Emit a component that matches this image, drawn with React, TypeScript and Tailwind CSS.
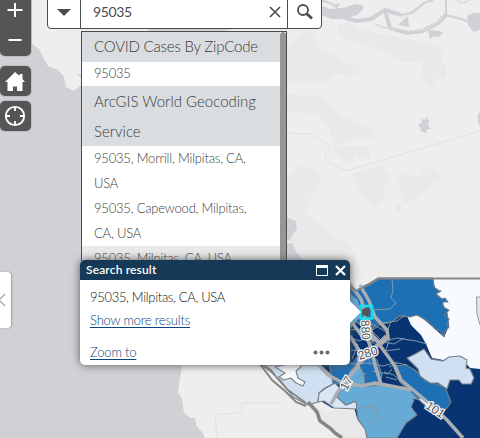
import React from "react";

const highways = [
  "M350 284L361 299L365 312L364 330L371 348L375 365L381 384",
  "M360 285L369 301L375 317L387 330L388 338L381 344L372 335L367 318",
  "M350 320L362 336L376 340L387 355L395 366L401 380L412 389L432 406L446 419L463 438",
  "M350 336L360 352L358 367L347 379L337 393L331 404",
  "M318 364L328 375L343 383L362 386L375 383L391 386L412 390",
  "M386 336L377 346L366 358L356 366",
];

function Map() {
  return (
    <svg className="absolute inset-0 h-full w-full" viewBox="0 0 480 438" fill="none">
      <path fill="#eeeeee" d="M0 0H480V438H0z" />
      <path fill="#d1d0d5" d="M0 0H25L32 44L39 49L44 59L48 66L58 70L64 77L66 87L74 91L81 85L180 110V365L182 366L179 384L178 392L182 399L184 413L190 418L195 418L196 425L202 432L205 438H0z" />
      <path fill="#cfcfd4" d="M77 73L81 75V78zM146 28L180 29L240 28L224 31H150z" />
      <g fill="#e9e9e9">
        <path d="M337 24L350 23L363 31L382 34L403 38L425 42L440 47L443 62L447 68L445 78L435 79L431 90L425 80L420 78L424 63L402 62L384 52L366 45L340 37z" />
        <path d="M287 45L310 30L322 50L336 55L344 62L360 66L361 74L350 76L335 73L327 83H287zM287 94L321 97L331 108L346 118L358 124L373 129V138L358 137L348 142L335 146L329 128L318 114L287 112z" />
        <path d="M287 178L300 166L315 169L321 180L311 196L305 212L315 221L327 230L337 239L349 244L363 274L351 287L330 261H287z" />
        <path d="M331 146H367L371 158L360 159L356 153L352 163L341 160zM350 173L365 171L382 165L390 177L384 188L383 201L375 207L369 202L361 191L354 180zM395 178L405 173L419 178L426 168L438 172L441 181L431 184L424 193L410 201L402 204L400 188zM398 203L403 208L399 214L395 207z" />
      </g>
      <g fill="#d0d0d6">
        <path d="M320 5L330 9L343 8L356 4L363 5V9L357 15L344 19L331 19L320 14zM333 5L340 3L337 9zM398 25L408 16L409 27zM428 30L440 31L443 33L439 37L434 36L430 39zM467 16L474 13L480 13V30L474 32L468 25zM418 125L422 122L421 119L425 120L426 117L429 121L428 125L431 129L427 129L426 133L421 131L420 127zM478 114L480 112V126L478 123z" />
        <path d="M287 217L290 219L296 221L297 229L292 235L290 241L287 239zM287 244L292 243L297 253L303 260H287z" />
      </g>
      <path stroke="#d0d0d6" strokeWidth="2" d="M320 0L330 3L336 7M401 15L411 13L424 3L433 0M446 0V15M446 15L461 19L472 23" />
      <path stroke="#d0d0d6" strokeWidth="4" d="M345 18L357 21L371 19L385 10L401 15M385 10L390 28L407 33L422 31L438 23L446 15" />
      <path stroke="#e4e4e6" strokeWidth="1" d="M386 13L402 17L412 14L428 2M388 13L392 27L409 31L427 29L444 17" />
      <path stroke="#d7d7da" strokeWidth="1.5" d="M375 24L382 27L394 29M457 0L461 3L466 2L468 0" />
      <path stroke="#e1e1e1" d="M287 133L312 134L320 140L331 146L325 155L326 160L346 171L430 146L480 131M217 438L215 415L242 412V403H280" />
      <path fill="#e8e8e8" d="M310 405L327 414L334 410L356 410L364 424L367 438H344L325 424z" />
      <path d="M260 364L272 380L285 391L296 402L306 406" stroke="#858585" strokeWidth="2" />
      <path fill="#083471" d="M350 288L355 291L362 287L370 283L378 278L480 279V438H367L365 429L357 418L354 407L332 408L319 400L308 405L293 397L288 391L280 380L271 370L260 365L350 360z" />
      <path fill="#f7faff" d="M433 279H480V369L470 368L461 357L449 361L432 358L426 344L421 335L411 325L407 316L419 315L444 337L449 326L447 311L436 293z" />
      <path fill="#e6e6e6" stroke="#999" d="M480 297H476.500L477 314L480 325" />
      <g stroke="#778087" strokeWidth="1.1" strokeLinejoin="round">
        <path fill="#d0e0f2" d="M262 365H319L331 374L333 384L325 388L319 393L318 402L308 405L293 397L287 389L281 381L271 372z" />
        <path fill="#f7f9fc" d="M275 367L288 364L300 363L301 367L296 371L298 378L305 382L303 386L296 383L291 378L284 380L279 377L285 373z" />
        <path fill="#d9e7f5" d="M319 393L326 388L335 383L342 391L337 397L346 405L356 401L357 409L334 408L324 401L318 402z" />
        <path fill="#1e70b4" d="M329 363H353L362 350L377 360L382 375L379 386L352 386L333 383z" />
        <path fill="#66abd6" d="M350 371L358 363L364 374L365 387L386 384L404 389L414 400L411 407L417 415L406 423L397 438H367L365 429L358 420L356 401L346 405L337 397L343 386" />
        <path fill="#1e70b4" d="M350 289L355 291L362 287L370 283L378 278H433L434 287L438 290L441 291L436 294L442 299L445 298L448 302L443 302L443 307L449 310L445 315L449 319L447 324L449 327L445 331L444 337L440 331L435 329L430 323L424 319L417 315L410 317L400 316L390 323L377 324L371 330L351 320z" />
        <path fill="#1e70b4" d="M393 366L406 365L415 370L426 381L445 387L451 402L447 408L439 415L428 407L408 390L400 382z" />
        <path fill="#d0e0f2" d="M407 358L415 354L424 349L431 359L443 361L449 357L460 356L467 360L466 368L470 369L474 378L471 384L462 384L459 380H450L447 389L438 383L430 383L424 379L420 376L418 369z" />
        <path fill="#f3f6fb" d="M417 398L425 399L438 407L438 414L429 409z" />
      </g>
      <path fill="#66abd6" d="M350 294L358 300L361 316L350 329zM403 387L411 392L418 400L407 397z" />
      <g stroke="#7f9aaa" strokeWidth="1">
        <path d="M392 279L393 290L391 298L396 303L390 309L371 310M371 331L382 323L397 321L405 315M371 341L385 341L397 338L416 341L427 344M350 330L360 329L365 335L372 324L387 332L390 324M350 338L360 341L372 331L383 342L394 344L404 338M351 350L365 351L372 342L385 351L400 349M350 307L363 312M351 364L370 363L383 366L397 362M384 372L394 375L400 381M372 371L388 374L392 369M366 373L357 378L364 387M357 409L369 405L379 409M370 407L376 410L381 418L376 423L370 421M389 367L398 363L407 365M386 377L397 380M358 344L352 359M367 349L370 365M390 338L386 350" />
      </g>
      <g stroke="#a9adb4" strokeWidth="3.5" strokeLinejoin="round">
        {highways.map((d) => <path key={d} d={d} />)}
      </g>
      <path stroke="#858585" strokeWidth="1.8" d="M350 286L356 291L364 287L370 284L379 278.5H480M260 363L271 370L277 378L288 390L306 403" />
      <path d="M308 402L317 412L320 421L330 428L335 433L342 438" stroke="#858585" strokeWidth="3.5" />
      <g fill="#4f5357" stroke="#f8f8f8" strokeWidth="2.5" paintOrder="stroke" fontFamily="Liberation Sans, sans-serif" fontSize="12" textAnchor="middle">
        <text transform="translate(361.500 330) rotate(87)">880</text>
        <text transform="translate(369 357) rotate(-18)">280</text>
        <text transform="translate(350 385) rotate(-62)">17</text>
        <text transform="translate(433 413) rotate(34)">101</text>
      </g>
      <path d="M360.500 306H372V318.500H360.500z" stroke="#18dfe7" strokeWidth="2.5" />
      <circle cx="366" cy="312" r="4" fill="#555" />
    </svg>
  );
}

const item = "px-3 text-[13px] font-light leading-[25px] tracking-[-0.2px]";
const group = "bg-[#d9dde0] px-3 text-[15px] font-light";
const link = "self-start font-light leading-[18px] tracking-[-0.18px] text-[#0d4480] underline underline-offset-2";

export default function App() {
  return (
    <main className="relative h-[438px] w-[480px] overflow-hidden bg-[#eeeeee] font-['Lato',sans-serif] text-[#3c3c3c]">
      <Map />

      <div className="absolute left-0 top-0 flex w-[30.5px] flex-col text-white">
        <div className="flex h-14 flex-col rounded-b-[5px] bg-[#555] shadow-[0_0_0_1px_#bdbdc1]">
          <button aria-label="Zoom in" className="h-6">
            <svg width="30" height="24"><path d="M15 3V17M7.500 10H22.500" stroke="white" strokeWidth="2" /></svg>
          </button>
          <button aria-label="Zoom out" className="h-8">
            <svg width="30" height="32"><path d="M8.500 16H21.500" stroke="white" strokeWidth="2" /></svg>
          </button>
        </div>
        <button aria-label="Home" className="mt-[10px] h-[30px] rounded-[5px] bg-[#555] shadow-[0_0_0_1px_#bdbdc1]">
          <svg width="30" height="30" fill="white"><path d="M15 6L5 16H7.500V25H13V20.500H17V25H22.500V16H25L22.500 13V8H19.500V10z" /></svg>
        </button>
        <button aria-label="My location" className="mt-[5px] h-[30px] rounded-[5px] bg-[#555] shadow-[0_0_0_1px_#bdbdc1]">
          <svg width="30" height="30" fill="none" stroke="white" strokeWidth="1.8"><circle cx="15" cy="15" r="9.2" /><path d="M15 6V10M15 20V24M6 15H10M20 15H24" /></svg>
        </button>
      </div>

      <button aria-label="Open panel" className="absolute left-0 top-[272px] flex h-14 w-[11px] items-center rounded-r-[4px] bg-white shadow-[1px_0_2px_#9b9b9f]">
        <svg width="8" height="14" fill="none" stroke="#aaa" strokeWidth="1.4"><path d="M5 1L-1 7L5 13" /></svg>
      </button>

      <div className="absolute left-[47px] top-[-5px] flex h-[34px] w-[275px] rounded-b-[4px] border border-[#4c4c4c] bg-white text-[#4c4c4c]">
        <button aria-label="Search source" className="flex w-[33px] items-center justify-center border-r border-[#4c4c4c]">
          <svg width="14" height="8" className="mt-0.5" fill="currentColor"><path d="M0 0H14L7 7z" /></svg>
        </button>
        <div className="flex w-[207px] items-center border-r border-[#4c4c4c] pl-3 pr-1.5">
          <span className="flex-1 text-[14px] leading-5 tracking-[-0.4px]">95035</span>
          <svg width="12" height="12" fill="none" stroke="currentColor" strokeWidth="1.6"><path d="M1 1L11 11M11 1L1 11" /></svg>
        </div>
        <button aria-label="Search" className="flex flex-1 items-center justify-center">
          <svg width="18" height="18" fill="none" stroke="currentColor"><circle cx="7" cy="7" r="5" strokeWidth="1.8" /><path d="M10.500 10.500L16 15.500" strokeWidth="2.8" /></svg>
        </button>
      </div>

      <div className="absolute left-[81px] top-[31px] flex h-[250px] w-[206px] border border-[#4c4c4c] bg-white">
        <div className="w-[198px]">
          <h2 className={`${group} h-[30px] leading-[28px] tracking-[-0.2px]`}>COVID Cases By ZipCode</h2>
          <p className={`${item} -mt-px`}>95035</p>
          <h2 className={`${group} h-[60px] leading-[30px]`}>ArcGIS World Geocoding<br />Service</h2>
          <p className={item}>95035, Morrill, Milpitas, CA,<br />USA</p>
          <p className={item}>95035, Capewood, Milpitas,<br />CA, USA</p>
          <p className={`${item} bg-[#e9e9e9]`}>95035, Milpitas, CA, USA</p>
        </div>
        <div className="flex-1 rounded-t-[4px] bg-[#969696]" />
      </div>

      <section className="absolute left-20 top-[260px] flex h-[105px] w-[270px] flex-col rounded-[5px] bg-white text-[13px] text-[#111] shadow-[0_0_8px_#555]">
        <header className="flex h-5 items-center rounded-t-[5px] bg-[#153957] pl-1.5 pr-1 text-[12px] font-semibold leading-5 tracking-[0.15px] text-white">
          <span className="flex-1">Search result</span>
          <svg width="12" height="11" className="mr-[7px]" fill="none" stroke="white"><path d="M.5 .5H11.500V10.500H.5z" /><path d="M0 1.500H12" strokeWidth="3" /></svg>
          <svg width="11" height="11" fill="none" stroke="white" strokeWidth="2.2"><path d="M1 1L10 10M10 1L1 10" /></svg>
        </header>
        <div className="flex flex-1 flex-col px-[10px] pt-[7px]">
          <p className="h-[24px] font-light leading-5 tracking-[-0.32px]">95035, Milpitas, CA, USA</p>
          <a className={link}>Show more results</a>
          <div className="mt-[14px] flex items-center justify-between pr-[10px]">
            <a className={link}>Zoom to</a>
            <svg width="17" height="5" fill="#6b6b6b"><circle cx="2.5" cy="2.5" r="2" /><circle cx="8.5" cy="2.5" r="2" /><circle cx="14.5" cy="2.5" r="2" /></svg>
          </div>
        </div>
        <svg className="absolute left-[270px] top-[41px]" width="11" height="22" fill="white"><path d="M0 0L11 11L0 22z" /></svg>
      </section>
    </main>
  );
}
